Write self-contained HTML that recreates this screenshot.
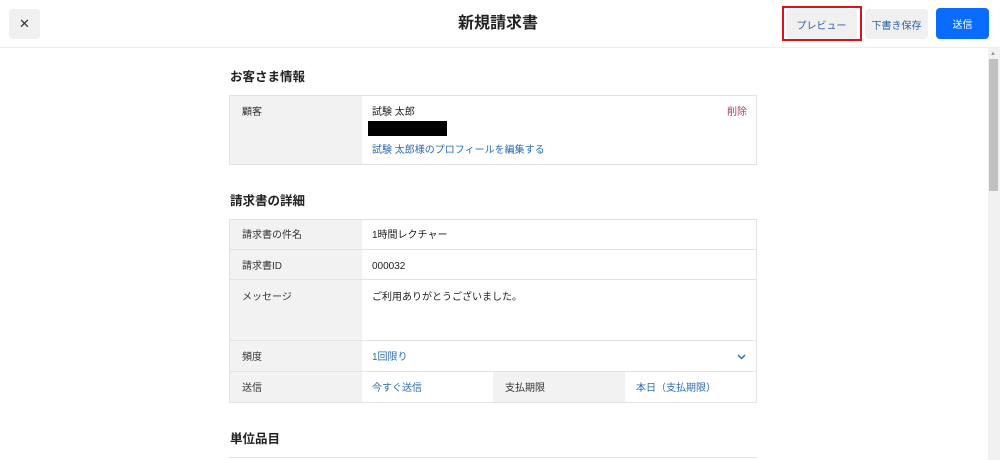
<!DOCTYPE html><html><head><meta charset="utf-8"><style>
*{box-sizing:border-box;margin:0;padding:0}
body{width:1000px;height:460px;overflow:hidden;background:#fff;font-family:"Liberation Sans","Noto Sans CJK JP",sans-serif;color:#222;position:relative}
.a{position:absolute}
.btn{position:absolute;border-radius:4px;font-size:10px;display:flex;align-items:center;justify-content:center}
h2{position:absolute;left:230px;font-size:12.5px;font-weight:bold;color:#222;line-height:14px}
.lab{position:absolute;background:#f2f2f2;font-size:10px;color:#333;padding-left:12px;line-height:12px}
.val{position:absolute;font-size:10px;color:#222;padding-left:10px;line-height:12px}
.blue{color:#2b6cb0}
.tbl{position:absolute;left:229px;width:528px;border:1px solid #e3e3e3}
.hl{position:absolute;left:229px;width:528px;height:1px;background:#e3e3e3}
</style></head><body>
<div class="btn" style="left:9px;top:9px;width:31px;height:30px;background:#f0f0f0;font-size:13px;color:#333">✕</div>
<div class="a" style="left:0;top:15px;width:996px;text-align:center;font-size:16px;font-weight:bold;color:#222;line-height:18px">新規請求書</div>
<div class="a" style="left:782px;top:6px;width:80px;height:35px;border:2px solid #d9121b"></div>
<div class="btn" style="left:786px;top:9px;width:71px;height:30px;background:#f0f0f0;color:#2b5fa8">プレビュー</div>
<div class="btn" style="left:865px;top:9px;width:63px;height:30px;background:#f0f0f0;color:#2b5fa8">下書き保存</div>
<div class="btn" style="left:936px;top:8px;width:53px;height:31px;background:#0a6cff;color:#fff">送信</div>
<div class="a" style="left:0;top:47px;width:1000px;height:1px;background:#eee"></div>
<div class="a" style="left:988px;top:48px;width:12px;height:412px;background:#f1f1f1"></div>
<div class="a" style="left:989px;top:59px;width:9px;height:132px;background:#c1c1c1"></div>
<div class="a" style="left:990px;top:51px;font-size:6px;color:#999">▲</div>

<h2 style="top:70px">お客さま情報</h2>
<div class="tbl" style="top:95px;height:70px"></div>
<div class="lab" style="left:230px;top:96px;width:132px;height:68px;padding-top:11px">顧客</div>
<div class="val" style="left:362px;top:107px">試験 太郎</div>
<div class="a" style="left:368px;top:121px;width:79px;height:15px;background:#000"></div>
<div class="val blue" style="left:362px;top:145px">試験 太郎様のプロフィールを編集する</div>
<div class="a" style="left:727px;top:107px;font-size:10px;color:#b03a5b;line-height:12px">削除</div>

<h2 style="top:194px">請求書の詳細</h2>
<div class="tbl" style="top:219px;height:184px"></div>
<div class="lab" style="left:230px;top:220px;width:132px;height:182px"></div>
<div class="lab" style="left:493px;top:372px;width:132px;height:30px"></div>
<div class="hl" style="top:249px"></div><div class="hl" style="top:279px"></div><div class="hl" style="top:340px"></div><div class="hl" style="top:371px"></div>
<div class="lab" style="left:230px;top:230px;background:none">請求書の件名</div>
<div class="val" style="left:362px;top:230px">1時間レクチャー</div>
<div class="lab" style="left:230px;top:261px;background:none">請求書ID</div>
<div class="val" style="left:362px;top:261px">000032</div>
<div class="lab" style="left:230px;top:292px;background:none">メッセージ</div>
<div class="val" style="left:362px;top:292px">ご利用ありがとうございました。</div>
<div class="lab" style="left:230px;top:352px;background:none">頻度</div>
<div class="val blue" style="left:362px;top:352px">1回限り</div>
<svg class="a" style="left:737px;top:354px" width="9" height="6"><path d="M1 1L4.5 4.5L8 1" stroke="#2b6cb0" stroke-width="1.5" fill="none"/></svg>
<div class="lab" style="left:230px;top:383px;background:none">送信</div>
<div class="val blue" style="left:362px;top:383px">今すぐ送信</div>
<div class="lab" style="left:493px;top:383px;background:none">支払期限</div>
<div class="val blue" style="left:626px;top:383px">本日（支払期限）</div>

<h2 style="top:432px">単位品目</h2>
<div class="hl" style="top:457px"></div>
</body></html>
